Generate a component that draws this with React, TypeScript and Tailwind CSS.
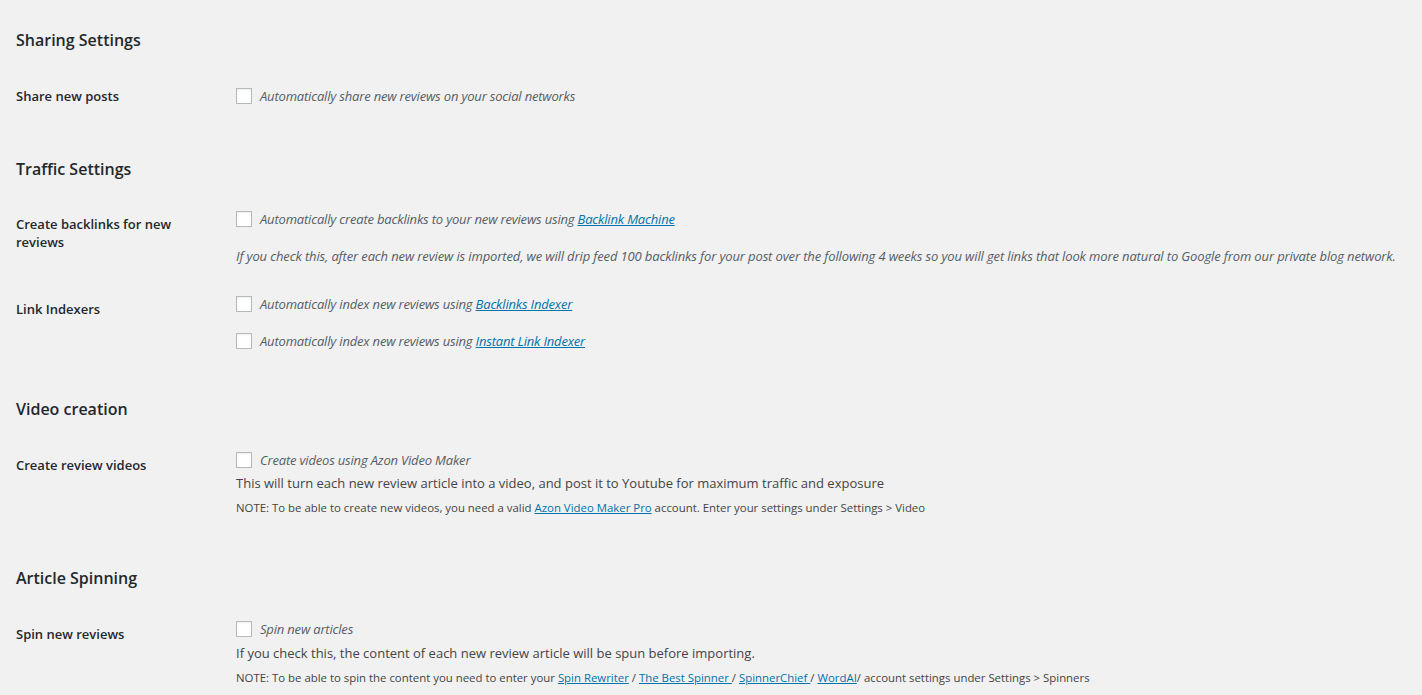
import React from "react"

const font = { fontFamily: '"Open Sans", "Liberation Sans", sans-serif' }

function Heading({ children, className = "" }: { children: React.ReactNode; className?: string }) {
  return (
    <h2 className={`h-6 text-[16px] leading-6 font-semibold text-[#23282d] ${className}`}>{children}</h2>
  )
}

function Check() {
  return (
    <span className="inline-block h-4 w-4 shrink-0 border border-[#b4b9be] bg-white shadow-[inset_0_1px_2px_rgba(0,0,0,0.07)]" />
  )
}

function Link({ children }: { children: React.ReactNode }) {
  return <a className="text-[#0073aa] underline">{children}</a>
}

function CheckLine({ children, className = "" }: { children: React.ReactNode; className?: string }) {
  return (
    <div className={`flex h-4 items-center gap-2 ${className}`}>
      <Check />
      <span className="text-[13px] italic leading-4 tracking-[-0.18px] text-[#555d66]">{children}</span>
    </div>
  )
}

function Row({
  label,
  thPad,
  tdPad,
  children,
}: {
  label: React.ReactNode
  thPad: string
  tdPad: string
  children: React.ReactNode
}) {
  return (
    <div className="flex">
      <div className={`w-[220px] shrink-0 pr-[10px] text-[13px] leading-[18px] font-semibold text-[#23282d] ${thPad}`}>
        {label}
      </div>
      <div className={`flex flex-col ${tdPad}`}>{children}</div>
    </div>
  )
}

export default function App() {
  return (
    <div className="min-h-[695px] bg-[#f1f1f1] pl-4 pt-[28px]" style={font}>
      <Heading>Sharing Settings</Heading>
      <Row label="Share new posts" thPad="pt-[35px]" tdPad="pt-[36px]">
        <CheckLine>Automatically share new reviews on your social networks</CheckLine>
      </Row>

      <Heading className="mt-[52px]">Traffic Settings</Heading>
      <Row label={<>Create backlinks for new<br />reviews</>} thPad="pt-[34px]" tdPad="pt-[30px]">
        <CheckLine>
          Automatically create backlinks to your new reviews using <Link>Backlink Machine</Link>
        </CheckLine>
        <p className="mt-[19px] whitespace-nowrap text-[13px] italic leading-5 tracking-[-0.13px] text-[#555d66]">
          If you check this, after each new review is imported, we will drip feed 100 backlinks for your post over the
          following 4 weeks so you will get links that look more natural to Google from our private blog network.
        </p>
      </Row>
      <Row label="Link Indexers" thPad="pt-[34px]" tdPad="pt-[30px]">
        <CheckLine>
          Automatically index new reviews using <Link>Backlinks Indexer</Link>
        </CheckLine>
        <CheckLine className="mt-[21px]">
          Automatically index new reviews using <Link>Instant Link Indexer</Link>
        </CheckLine>
      </Row>

      <Heading className="mt-[48px]">Video creation</Heading>
      <Row label="Create review videos" thPad="pt-[35px]" tdPad="pt-[31px]">
        <CheckLine>Create videos using Azon Video Maker</CheckLine>
        <p className="mt-[5px] text-[13px] leading-5 text-[#444]">
          This will turn each new review article into a video, and post it to Youtube for maximum traffic and exposure
        </p>
        <p className="mt-[6px] text-[11.4px] leading-[18px] text-[#444]">
          NOTE: To be able to create new videos, you need a valid <Link>Azon Video Maker Pro</Link> account. Enter your
          settings under Settings &gt; Video
        </p>
      </Row>

      <Heading className="mt-[49px]">Article Spinning</Heading>
      <Row label="Spin new reviews" thPad="pt-[35px]" tdPad="pt-[31px]">
        <CheckLine>Spin new articles</CheckLine>
        <p className="mt-[6px] text-[13px] leading-5 text-[#444]">
          If you check this, the content of each new review article will be spun before importing.
        </p>
        <p className="mt-[6px] text-[11.4px] leading-[18px] text-[#444]">
          NOTE: To be able to spin the content you need to enter your <Link>Spin Rewriter</Link> /{" "}
          <Link>The Best Spinner </Link>/ <Link>SpinnerChief </Link>/ <Link>WordAI</Link>/ account settings under
          Settings &gt; Spinners
        </p>
      </Row>
    </div>
  )
}
